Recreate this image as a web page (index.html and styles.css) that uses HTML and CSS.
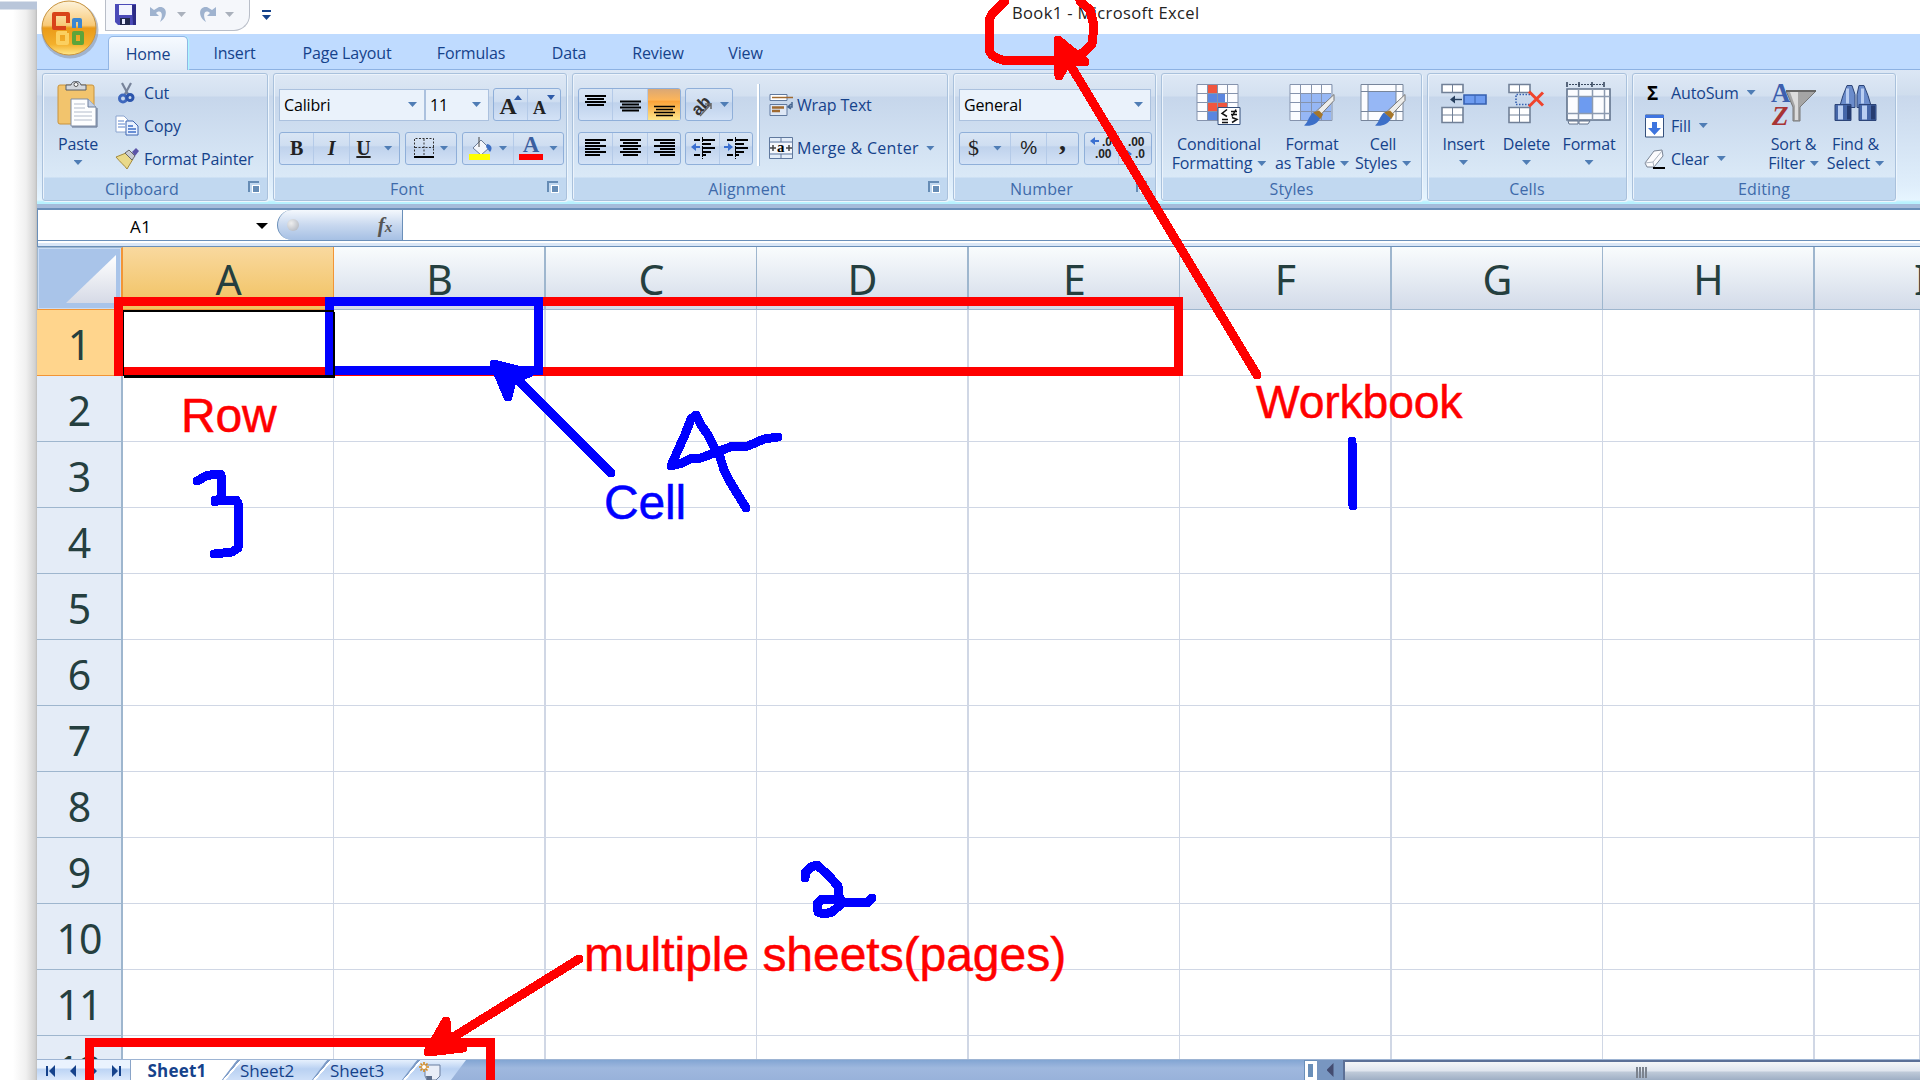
FILE: index.html
```html
<!DOCTYPE html>
<html lang="en">
<head>
<meta charset="utf-8">
<title>Book1 - Microsoft Excel</title>
<link rel="stylesheet" href="styles.css">
</head>
<body>
<aside class="desktop"></aside>
<main class="window">
  <header class="titlebar">
    <div class="qat">
      <svg width="21" height="21" viewBox="0 0 21 21"><path d="M0 0h21v21H3l-3-3z" fill="#4b4bb8"/><path d="M4 1h13v10H4z" fill="#f2f4ff"/><path d="M17 1h4v20h-3z" fill="#2c2c86"/><path d="M5 14h10v7H5z" fill="#222a4c"/><path d="M7 15h3v5H7z" fill="#e8ecff"/></svg>
      <svg class="undo" width="20" height="20" viewBox="0 0 20 20"><path d="M1 3v9h9L7 9c5-4 8 1 4 9 8-5 8-16-1-15L5 6z" fill="#9fb3cf"/></svg><i class="dd gray"></i>
      <svg class="redo" width="20" height="20" viewBox="0 0 20 20"><path d="M19 3v9h-9l3-3c-5-4-8 1-4 9-8-5-8-16 1-15l5 3z" fill="#9fb3cf"/></svg><i class="dd gray"></i>
    </div>
    <div class="qat-more"><i></i><i class="dd"></i></div>
    <h1>Book1 - Microsoft Excel</h1>
  </header>
  <nav class="tabs">
    <a class="active t1">Home</a><a class="t2">Insert</a><a class="t3">Page Layout</a><a class="t4">Formulas</a><a class="t5">Data</a><a class="t6">Review</a><a class="t7">View</a>
  </nav>
  <section class="ribbon">
    <div class="group g-clip">
      <div class="body">
        <div class="big paste">
          <svg width="44" height="48" viewBox="0 0 44 48"><rect x="2" y="4" width="36" height="39" rx="2" fill="#f2c46d" stroke="#c8923c"/><path d="M10 4h5c1-5 9-5 10 0h5v5H10z" fill="#d4d8de" stroke="#555c68"/><circle cx="20" cy="3.500" r="2" fill="#fff" stroke="#555"/><path d="M15 18h17l8 8v19H15z" fill="#fdfeff" stroke="#7f8ca3"/><path d="M32 18v8h8" fill="#c4d0e4" stroke="#6d7f9c"/><path d="M18 23h11M18 27h11M18 31h18M18 35h18M18 39h18" stroke="#b3bccb"/><path d="M41 27v19H16" stroke="#5f6f8a" fill="none"/></svg>
          <span>Paste</span><i class="dd"></i>
        </div>
        <div class="stack">
          <div class="line"><svg width="24" height="24" viewBox="0 0 24 24"><path d="M7 2l7 13M16 2L9 15" stroke="#77839a" stroke-width="2.200"/><circle cx="8" cy="17.500" r="3.500" fill="none" stroke="#3f68bd" stroke-width="3"/><circle cx="15" cy="16.500" r="3" fill="none" stroke="#2c55ac" stroke-width="3"/></svg><span>Cut</span></div>
          <div class="line"><svg width="24" height="24" viewBox="0 0 24 24"><path d="M1 2h8l4 4v12H1z" fill="#fff" stroke="#8ba4cf"/><path d="M3 7h6M3 10h7M3 13h7" stroke="#5a83cc"/><path d="M11 7h7l5 5v9H11z" fill="#eaf2ff" stroke="#3c64b0"/><path d="M13 12h5M13 15h8M13 18h8" stroke="#3f6fc8" stroke-width="1.500"/></svg><span>Copy</span></div>
          <div class="line"><svg width="24" height="24" viewBox="0 0 24 24"><path d="M1 10l10-4 7 6-6 10C10 19 5 15 1 10z" fill="#e9d98a" stroke="#a48a3d"/><path d="M10 6l4-3 6 6-3 4z" fill="#c9ccd2" stroke="#666"/><path d="M17 5l4-4 3 3-4 5z" fill="#5b54a8"/></svg><span>Format Painter</span></div>
        </div>
      </div>
      <footer>Clipboard<i class="launch"></i></footer>
    </div>
    <div class="group g-font">
      <div class="body rows">
        <div class="r">
          <div class="select s1">Calibri<i class="dd"></i></div><div class="select s2">11<i class="dd"></i></div>
          <div class="set m4"><b class="w34 serif grow">A<i class="up"></i></b><b class="w34 serif shrink">A<i class="down"></i></b></div>
        </div>
        <div class="r">
          <div class="set"><b class="w33 serif">B</b><b class="w36 serif it">I</b><b class="w50 serif un"><u>U</u><i class="dd"></i></b></div>
          <div class="set m5"><b class="w50"><svg width="20" height="20" viewBox="0 0 20 20"><path d="M.5 17V.5h19V17M10 1v16M1 9.500h19" fill="none" stroke="#333" stroke-dasharray="2 1.500"/><path d="M0 19h20" stroke="#000" stroke-width="2"/></svg><i class="dd"></i></b></div>
          <div class="set m5"><b class="w50"><svg width="24" height="24" viewBox="0 0 24 24"><path d="M4 12l8-8 8 8-8 7z" fill="#f3f6fb" stroke="#6c7d97"/><path d="M10 1v10" stroke="#444"/><path d="M18 8c6 1 5 6 3 8l-4-5z" fill="#3d6fc4"/><path d="M0 18h21v6H0z" fill="#ff0"/></svg><i class="dd"></i></b><b class="w50"><span class="fcolor">A</span><i class="dd"></i></b></div>
        </div>
      </div>
      <footer>Font<i class="launch"></i></footer>
    </div>
    <div class="group g-align">
      <div class="body">
        <div class="rows">
          <div class="r">
            <div class="set"><b class="w34"><svg width="21" height="24"><path d="M0 3h21M2 6h17M0 9h21M2 12h17" stroke="#000" stroke-width="1.800"/></svg></b><b class="w35"><svg width="21" height="24"><path d="M0 8.500h21M2 11.500h17M0 14.500h21M2 17.500h17" stroke="#000" stroke-width="1.800"/></svg></b><b class="w33 on"><svg width="21" height="24"><path d="M0 13.500h21M2 16.500h17M0 19.500h21M2 22.500h17" stroke="#000" stroke-width="1.300"/></svg></b></div>
            <div class="set m4"><b class="w46"><svg width="25" height="26" viewBox="0 0 25 26"><text x="3" y="22" transform="rotate(-45 9 16)" font-family="Liberation Sans" font-size="17" font-weight="700" fill="#333">ab</text><path d="M11 24L22 12M22 11v6M22 12h-6" stroke="#666" fill="none" stroke-width="1.500"/></svg><i class="dd"></i></b></div>
          </div>
          <div class="r">
            <div class="set"><b class="w34"><svg width="21" height="18"><path d="M0 1h21M0 4h15M0 7h21M0 10h15M0 13h21M0 16h15" stroke="#000" stroke-width="1.800"/></svg></b><b class="w35"><svg width="21" height="18"><path d="M0 1h21M3 4h15M0 7h21M3 10h15M0 13h21M3 16h15" stroke="#000" stroke-width="1.800"/></svg></b><b class="w33"><svg width="21" height="18"><path d="M0 1h21M6 4h15M0 7h21M6 10h15M0 13h21M6 16h15" stroke="#000" stroke-width="1.800"/></svg></b></div>
            <div class="set m4"><b class="w33"><svg width="24" height="24"><path d="M11 4h13M11 8h9M11 12h13M11 16h9M3 4h6M3 19h6M11 19h4" stroke="#000" stroke-width="2"/><path d="M0 11l5-4v3h4v2H5v3z" fill="#3a6fd0"/><path d="M11.500 1v22" stroke="#000" stroke-dasharray="2 1"/></svg></b><b class="w33"><svg width="24" height="24"><path d="M11 4h13M11 8h9M11 12h13M11 16h9M3 4h6M3 19h6M11 19h4" stroke="#000" stroke-width="2"/><path d="M9 11L4 7v3H0v2h4v3z" fill="#3a6fd0"/><path d="M11.500 1v22" stroke="#000" stroke-dasharray="2 1"/></svg></b></div>
          </div>
        </div>
        <div class="sep"></div>
        <div class="rows wrapcol">
          <div class="r"><svg width="24" height="24" viewBox="0 0 24 24"><path d="M1 1.500h17v6H1z" fill="#fff" stroke="#60799e"/><path d="M3 4.500h21" stroke="#a06a30" stroke-width="1.500"/><path d="M1 11.500h17v11H1z" fill="#dfe8f6" stroke="#60799e"/><path d="M3 14.500h12M3 18h8" stroke="#a06a30" stroke-width="2.400"/><path d="M23 9v5h-3M22 11l-3 3 3 2" stroke="#44648f" fill="none" stroke-width="1.500"/></svg><span>Wrap Text</span></div>
          <div class="r"><svg width="24" height="24" viewBox="0 0 24 24"><path d="M.5 1.500h23v21H.5z" fill="#e3edf9" stroke="#60799e"/><path d="M1 6h22M1 18h22M12 1v5M12 18v5" stroke="#60799e"/><path d="M1 7h22v10H1z" fill="#f4f7fc"/><path d="M1 12h6M23 12h-6M4 9v6M20 9v6" stroke="#444" stroke-width="1.500"/><text x="8" y="16" font-family="Liberation Serif" font-size="15" font-weight="700" fill="#000">a</text></svg><span class="merge">Merge &amp; Center</span><i class="dd"></i></div>
        </div>
      </div>
      <footer>Alignment<i class="launch"></i></footer>
    </div>
    <div class="group g-num">
      <div class="body rows">
        <div class="r"><div class="select s3">General<i class="dd"></i></div></div>
        <div class="r">
          <div class="set"><b class="w50 serif n"><span>$</span><i class="dd"></i></b><b class="w36 sans">%</b><b class="w32 serif comma">,</b></div>
          <div class="set m5"><b class="w33"><svg width="24" height="24" viewBox="0 0 24 24" font-family="Liberation Sans" font-size="12" fill="#222"><path d="M0 5l5-4v3h4v2H5v3z" fill="#3a6fd0"/><text x="12" y="10">.0</text><text x="5" y="22">.00</text></svg></b><b class="w33"><svg width="24" height="24" viewBox="0 0 24 24" font-family="Liberation Sans" font-size="12" fill="#222"><path d="M9 18l-5-4v3H0v2h4v3z" fill="#3a6fd0"/><text x="5" y="10">.00</text><text x="12" y="22">.0</text></svg></b></div>
        </div>
      </div>
      <footer>Number<i class="launch"></i></footer>
    </div>
    <div class="group g-styles">
      <div class="body">
        <div class="big c1"><svg width="46" height="43" viewBox="0 0 46 43"><path d="M1 1h41v36H1z" fill="#fbfcff"/><path d="M12 1h9v9h-9zM12 19h19v9H12z" fill="#f0563f"/><path d="M12 10h17v9H12zM12 28h9v9h-9z" fill="#5b86e0"/><path d="M1 1h41v36H1zM11.500 1v36M21.500 1v36M31.500 1v36M1 10h41M1 19h41M1 28h41" fill="none" stroke="#8593ad"/><path d="M22 24h22v17H22z" fill="#fff" stroke="#334d78"/><path d="M31 26l-5 4 5 3M26 36h6M26 39h6M35 28h6M35 31h6M40 26l-4 7M36 34l5 2-5 3" stroke="#111" stroke-width="1.500" fill="none"/></svg><span>Conditional</span><span>Formatting <i class="dd"></i></span></div>
        <div class="big c2"><svg width="46" height="43" viewBox="0 0 46 43"><path d="M1 1h41v36H1z" fill="#fbfcff"/><path d="M11 10h31v27H11z" fill="#96b7f5"/><path d="M1 1h42v36H1zM11.500 1v36M22.500 1v36M32.500 1v36M1 10h41M1 19h41M1 28h41" fill="none" stroke="#8593ad"/><path d="M45 11v6L31 32l-4-4z" fill="#ededeb" stroke="#797979"/><path d="M24 29l6-2 4 4-3 5z" fill="#a5762b"/><path d="M24 29l7 6c-3 6-9 8-16 7 4-3 4-8 9-13z" fill="#3c6fc8"/></svg><span>Format</span><span>as Table <i class="dd"></i></span></div>
        <div class="big c3"><svg width="46" height="43" viewBox="0 0 46 43"><path d="M1 1h42v36H1z" fill="#fbfcff"/><path d="M8 8h28v20H8z" fill="#96b7f5"/><path d="M1 1h42v36H1zM8 1v36M36 1v36M1 8h42M1 28h42" fill="none" stroke="#77859b"/><path d="M45 11v6L31 32l-4-4z" fill="#ededeb" stroke="#797979"/><path d="M24 29l6-2 4 4-3 5z" fill="#a5762b"/><path d="M24 29l7 6c-3 6-9 8-16 7 4-3 4-8 9-13z" fill="#3c6fc8"/></svg><span>Cell</span><span>Styles <i class="dd"></i></span></div>
      </div>
      <footer>Styles</footer>
    </div>
    <div class="group g-cells">
      <div class="body">
        <div class="big d1"><svg width="46" height="43" viewBox="0 0 46 43"><path d="M1 1h21v8H1zM1 24h21v15H1z" fill="#fff" stroke="#718097" stroke-width="1.600"/><path d="M11.500 1v8M11.500 24v15M1 31.500h21" stroke="#718097"/><path d="M23 11.500h22v9H23z" fill="#6d9bf0" stroke="#3660b0" stroke-width="1.600"/><path d="M34 12v8" stroke="#3660b0"/><path d="M21 16H11" stroke="#28405f" stroke-width="1.400"/><path d="M9 16l5-4v8z" fill="#28405f"/></svg><span>Insert</span><i class="dd"></i></div>
        <div class="big d2"><svg width="46" height="43" viewBox="0 0 46 43"><path d="M5 1h21v8H5zM5 24h21v15H5z" fill="#fff" stroke="#718097" stroke-width="1.600"/><path d="M15.500 1v8M15.500 24v15M5 31.500h21" stroke="#718097"/><path d="M26 11H12v10h14" fill="none" stroke="#3660b0" stroke-width="1.600" stroke-dasharray="1.500 1.500"/><path d="M25 8l14 14M39 9L25 23" stroke="#f0432c" stroke-width="3"/></svg><span>Delete</span><i class="dd"></i></div>
        <div class="big d3"><svg width="46" height="46" viewBox="0 0 46 46"><path d="M1 0v5M13 0v5M26 0v5M38 0v5" stroke="#39495f" stroke-width="1.600"/><path d="M3 2.500h34" stroke="#39495f" stroke-dasharray="2 1"/><path d="M1 7h43v31H1z" fill="#fbfcff" stroke="#62738c" stroke-width="1.600"/><path d="M13 15h13v16H13z" fill="#6d9bf0"/><path d="M12.500 7v31M26.500 7v31M38.500 7v31M1 14.500h43M1 31.500h43" stroke="#8c9ab0" stroke-width="1.500"/><path d="M2 39h10v3H3zM13 39h11l-2 3h-9z" fill="#fff" stroke="#62738c"/></svg><span>Format</span><i class="dd"></i></div>
      </div>
      <footer>Cells</footer>
    </div>
    <div class="group g-edit">
      <div class="body">
        <div class="stack">
          <div class="line"><b class="sigma">Σ</b><span>AutoSum</span><i class="dd"></i></div>
          <div class="line"><svg width="20" height="24" viewBox="0 0 20 24"><path d="M.5 1h18v22H.5z" fill="#fff" stroke="#35507c"/><path d="M0 1h19v3H0z" fill="#3f74e0"/><path d="M7 8h5v6h4l-6.500 7L3 14h4z" fill="#3d74de"/></svg><span>Fill</span><i class="dd"></i></div>
          <div class="line"><svg width="22" height="22" viewBox="0 0 22 22"><path d="M1 15L10 3l8-1 1 6-9 11H3z" fill="#fbfbfd" stroke="#7a8494"/><path d="M1 15l8-1 9-11M9 14l1 5" fill="none" stroke="#aab2be"/><path d="M9 20h12" stroke="#000" stroke-width="2"/></svg><span>Clear</span><i class="dd"></i></div>
        </div>
        <div class="big e1"><svg width="46" height="46" viewBox="0 0 46 46"><text x="0" y="20" font-family="Liberation Serif" font-size="27" font-weight="700" fill="#3c5fae">A</text><text x="1" y="43" font-family="Liberation Serif" font-size="27" font-weight="700" font-style="italic" fill="#a83434">Z</text><path d="M15 9h30L29 25v14h-7V25z" fill="#a5a5a5" stroke="#777"/><path d="M19 10h8v28h-3V24z" fill="#ddd"/><path d="M15 9h30" stroke="#666" stroke-width="2"/></svg><span>Sort &amp;</span><span>Filter <i class="dd"></i></span></div>
        <div class="big e2"><svg width="46" height="43" viewBox="0 0 46 43"><g stroke="#2c4478"><path d="M14 2h5l3 9v13h-6L7 22l3-10zM26 2h5l4 10 3 10-9 2h-5V11z" fill="#6b8ccb"/><path d="M2 21h16v16H2zM26 21h17v16H26z" fill="#4566a8"/></g><path d="M5 22h5v14H5zM29 22h5v14h-5zM13 5h3v15h-3zM28 5h3v15h-3z" fill="#b9cef2"/><path d="M14 22h4v14h-4zM38 22h4v14h-4z" fill="#263c70"/></svg><span>Find &amp;</span><span>Select <i class="dd"></i></span></div>
      </div>
      <footer>Editing</footer>
    </div>
  </section>
  <section class="formula">
    <div class="namebox"><span>A1</span><i class="dd black"></i></div>
    <div class="fx"><i class="knob"></i><em>f<small>x</small></em></div>
    <div class="entry"></div>
  </section>
  <section class="sheet">
    <div class="row head"><b class="corner"></b><i class="sel">A</i><i>B</i><i>C</i><i>D</i><i>E</i><i>F</i><i>G</i><i>H</i><i class="cut">I</i></div>
    <div class="row"><b class="sel">1</b><i class="cursor"></i><i></i><i></i><i></i><i></i><i></i><i></i><i></i><i></i></div>
    <div class="row"><b>2</b><i></i><i></i><i></i><i></i><i></i><i></i><i></i><i></i><i></i></div>
    <div class="row"><b>3</b><i></i><i></i><i></i><i></i><i></i><i></i><i></i><i></i><i></i></div>
    <div class="row"><b>4</b><i></i><i></i><i></i><i></i><i></i><i></i><i></i><i></i><i></i></div>
    <div class="row"><b>5</b><i></i><i></i><i></i><i></i><i></i><i></i><i></i><i></i><i></i></div>
    <div class="row"><b>6</b><i></i><i></i><i></i><i></i><i></i><i></i><i></i><i></i><i></i></div>
    <div class="row"><b>7</b><i></i><i></i><i></i><i></i><i></i><i></i><i></i><i></i><i></i></div>
    <div class="row"><b>8</b><i></i><i></i><i></i><i></i><i></i><i></i><i></i><i></i><i></i></div>
    <div class="row"><b>9</b><i></i><i></i><i></i><i></i><i></i><i></i><i></i><i></i><i></i></div>
    <div class="row"><b>10</b><i></i><i></i><i></i><i></i><i></i><i></i><i></i><i></i><i></i></div>
    <div class="row"><b>11</b><i></i><i></i><i></i><i></i><i></i><i></i><i></i><i></i><i></i></div>
    <div class="row"><b>12</b><i></i><i></i><i></i><i></i><i></i><i></i><i></i><i></i><i></i></div>
  </section>
  <footer class="bottom">
    <div class="navs"><svg width="94" height="21" viewBox="0 0 94 21" fill="#15428b"><path d="M9 6h2v10H9zM18 5v12l-6-6zM39 5v12l-6-6zM54 5v12l6-6zM75 5v12l6-6zM82 6h2v10h-2z"/></svg></div>
    <div class="stab first">Sheet1</div>
    <div class="stab">Sheet2</div>
    <div class="stab">Sheet3</div>
    <div class="stab new"><svg width="24" height="21" viewBox="0 0 24 21"><path d="M7 5h15v11l-4 4H9l-2-4z" fill="#e9eef8" stroke="#6b7f9f"/><path d="M8 16h6v5H9z" fill="#5e6f8d"/><path d="M6 2v10M1 7h10M2.500 3.500l7 7M9.500 3.500l-7 7" stroke="#d58a1e" stroke-width="1.600"/><circle cx="6" cy="7" r="2" fill="#fff"/></svg></div>
    <div class="filler"></div>
    <div class="split"></div>
    <div class="sarrow"></div>
    <div class="thumb"><i></i><i></i><i></i><i></i></div>
  </footer>
</main>
<svg class="orb" width="64" height="62" viewBox="0 0 64 62">
  <defs>
    <linearGradient id="orbFill" x1="0" y1="0" x2="0" y2="1"><stop offset="0" stop-color="#fdf3dc"/><stop offset=".45" stop-color="#f8c976"/><stop offset=".5" stop-color="#ea9a18"/><stop offset=".8" stop-color="#f3b02c"/><stop offset="1" stop-color="#ffe98c"/></linearGradient>
  </defs>
  <circle cx="32" cy="30" r="28.500" fill="#8d98aa" opacity=".6"/>
  <circle cx="31" cy="28" r="27" fill="url(#orbFill)" stroke="#c9933c"/>
  <g fill="none" stroke-width="4" stroke-linejoin="round">
    <path d="M28 28H16V14h14v9" stroke="#d8431a"/><path d="M36 28v-8h6v8" stroke="#3a86d0"/>
    <path d="M29 33h-9v10h9v-10" stroke="#fbd060"/><path d="M36 33h8v10h-8z" stroke="#5da43a"/>
  </g>
</svg>
<svg class="notes" width="1920" height="1080" viewBox="0 0 1920 1080">
  <g fill="none" stroke="#f00" stroke-width="9" stroke-linecap="round" stroke-linejoin="round" shape-rendering="crispEdges">
    <path d="M118.500 301.500H1178.500V371.500H118.500z" stroke-linejoin="miter"/>
    <path d="M89.500 1090V1042.500H490.500V1090" stroke-linejoin="miter"/>
    <path d="M1005 1L992 14Q989 18 989 26V50Q990 56 1002 60H1063L1083 53L1092 44L1094 26L1090 10L1080 1"/>
    <path d="M1257 375L1066 58"/><path d="M1058 40L1059 76L1068 60L1085 62z" fill="#f00"/>
    <path d="M579 959L455 1036"/><path d="M446 1021L428 1052L463 1048L448 1042z" fill="#f00"/>
  </g>
  <g fill="none" stroke="#00f" stroke-width="9" stroke-linecap="round" stroke-linejoin="round" shape-rendering="crispEdges">
    <path d="M329.500 301.500H538.500V370.500H329.500z" stroke-linejoin="miter"/>
    <path d="M611 473L515 377"/><path d="M494 364L508 397L512 380L529 373z" fill="#00f"/>
    <path d="M197 481L206 476L213 474.500H221V497L215 502V500H236L238 503V548L232 552L214 554"/>
    <path d="M696 415L691 419L684 437L678 450L671 466L682 463L692 458H701L733 446H748L764 439L778 437M696 415L701 425L708 435L714 447L720 457L724 470L729 480L735 490L746 508"/>
    <path d="M1352 441L1353 506"/>
    <path d="M805 878V873L811 867L817 865L828 875L838 886L840 905L832 912L824 914L818 912L817 904L822 899H838L845 902.500H868L872 898"/>
  </g>
  <g font-family="Liberation Sans, Arial, sans-serif" font-size="48" fill="#f00" stroke="#f00" stroke-width=".5">
    <text x="181" y="432">Row</text>
    <text x="1256" y="418" font-size="46.300">Workbook</text>
    <text x="584" y="970.500" textLength="482">multiple sheets(pages)</text>
    <text x="604" y="518.500" fill="#00f" stroke="#00f">Cell</text>
  </g>
</svg>
</body>
</html>
```
FILE: styles.css
```css
* { box-sizing: border-box; }
html, body { margin: 0; width: 1920px; height: 1080px; overflow: hidden; }
body { display: flex; background: #fff; position: relative; font: 16px "Open Sans", "Noto Sans", sans-serif; color: #15428b; letter-spacing: -.15px; }
i, em { font-style: normal; }
.desktop { width: 37px; background: linear-gradient(#fff 0 1px, #b9c6da 2px 9px, transparent 10px), linear-gradient(90deg, #fff 35%, #f0f0f0 70%, #d2d2d2 95%, #bcbcbc); flex: none; }
.window { width: 1883px; height: 1080px; display: flex; flex-direction: column; flex: none; }
.dd { display: inline-block; width: 9px; height: 5px; background: #4f7db5; clip-path: polygon(0 0, 100% 0, 50% 100%); flex: none; }
.dd.gray { background: #aab1bc; }
.dd.black { width: 12px; height: 6px; background: #000; }

.titlebar { height: 34px; display: flex; background: #fff; flex: none; }
.qat { margin-left: 68px; width: 145px; height: 31px; border: 1px solid #b9bec8; border-top: 0; border-radius: 0 0 16px 0; background: #f5f7fb; display: flex; align-items: flex-start; padding: 4px 0 0 9px; }
.qat .undo { margin-left: 13px; }
.qat .redo { margin-left: 11px; }
.qat .dd { margin: 8px 0 0 8px; }
.qat-more { margin: 10px 0 0 12px; width: 9px; display: flex; flex-direction: column; gap: 3px; }
.qat-more i:first-child { height: 2px; background: #15428b; }
.qat-more .dd { background: #15428b; }
h1 { margin: 0 0 0 741px; font-size: 16.5px; font-weight: 400; color: #222; line-height: 26px; letter-spacing: .38px; white-space: nowrap; }

.tabs { height: 36px; background: #bfdbff; border-bottom: 1px solid #8db2e3; display: flex; align-items: flex-end; flex: none; }
.tabs a { height: 34px; line-height: 37px; text-align: center; white-space: nowrap; }
.t1 { margin-left: 71px; width: 80px; }
.tabs .active { line-height: 35px; background: linear-gradient(#f6faff, #dfe9f6); border: 1px solid #92b5e4; border-bottom: 0; border-radius: 5px 5px 0 0; box-shadow: 1px 0 1px #a8fbff; margin-bottom: -1px; }
.t2 { width: 93px; }
.t3 { width: 132px; }
.t4 { width: 116px; }
.t5 { width: 80px; }
.t6 { width: 98px; }
.t7 { width: 77px; }

.ribbon { height: 134px; padding: 3px 0 3px 5px; display: flex; gap: 5px; background: linear-gradient(#dce7f5, #cfdded 25px, #c9d8ec 26px, #dfeefb 115px, #e6f5ff 130px, #b8f2ff 132px); flex: none; }
.group { height: 128px; border: 1px solid #a9c1dc; border-radius: 3px; box-shadow: inset 1px 1px #ecf3fb, 1px 1px #eef6fd; display: flex; flex-direction: column; background: linear-gradient(#dee8f5, #d3e0f0 22px, #c6d6eb 23px, #dae9f7 103px, #c1d8f0 104px); flex: none; }
.g-clip { width: 226px; }
.g-font { width: 294px; }
.g-align { width: 376px; }
.g-num { width: 203px; }
.g-styles { width: 261px; }
.g-cells { width: 200px; }
.g-edit { width: 264px; }
.body { height: 103px; display: flex; }
.group footer { height: 23px; line-height: 24px; text-align: center; color: #3e6aaa; position: relative; padding-right: 26px; letter-spacing: .15px; }
.g-styles footer, .g-cells footer, .g-edit footer { padding-right: 0; }
.launch { position: absolute; right: 8px; top: 4px; width: 11px; height: 11px; border: 2px solid #668cb5; border-right: 0; border-bottom: 0; }
.launch::after { content: ""; position: absolute; left: 3px; top: 3px; width: 6px; height: 6px; background: #668cb5; outline: 1px solid #fff; }
.big { display: flex; flex-direction: column; align-items: center; line-height: 19px; white-space: nowrap; padding-top: 8px; flex: none; }
.big svg { display: block; height: 46px; margin-bottom: 7px; flex: none; }
.big > .dd { margin-top: 6px; }
.big span .dd { vertical-align: 3px; margin-left: 1px; }
.paste { width: 70px; padding-top: 7px; }
.paste svg { height: 48px; margin-bottom: 6px; }
.stack { display: flex; flex-direction: column; padding: 2px 0 0 0; }
.line { height: 33px; display: flex; align-items: center; white-space: nowrap; }
.g-clip .line svg { margin: 0 5px 0 2px; }
.rows { flex-direction: column; padding: 14px 0 0 5px; display: flex; gap: 11px; }
.r { display: flex; height: 33px; align-items: center; white-space: nowrap; }
.r + .r { height: 32px; }
.select { height: 32px; border: 1px solid #abc1de; background: #eaf2fb; color: #000; display: flex; align-items: center; justify-content: space-between; padding: 0 7px 0 4px; }
.s1 { width: 146px; }
.s2 { width: 64px; }
.s3 { width: 192px; }
.set { height: 33px; border: 1px solid #8fafd9; border-radius: 3px; display: flex; background: linear-gradient(#d9e5f4, #cfdef1 40%, #bfd2ec 45%, #d3e2f6); }
.set b { display: flex; align-items: center; justify-content: center; gap: 6px; color: #222; border-left: 1px solid #b4cae8; position: relative; }
.set b:first-child { border-left: 0; }
.m4 { margin-left: 4px; }
.m5 { margin-left: 5px; }
.w32 { width: 32px; }
.w33 { width: 33px; }
.w34 { width: 33px; }
.w35 { width: 35px; }
.w36 { width: 36px; }
.w46 { width: 46px; }
.w50 { width: 50px; }
.set .serif { font-family: "Liberation Serif", serif; font-size: 20px; }
.set .grow { font-size: 24px; padding: 3px 5px 0 0; }
.set .shrink { font-size: 18px; padding: 7px 9px 0 0; }
.up, .down { position: absolute; right: 5px; top: 6px; width: 8px; height: 5px; background: #2f5ba8; clip-path: polygon(50% 0, 100% 100%, 0 100%); }
.down { clip-path: polygon(0 0, 100% 0, 50% 100%); }
.it { font-style: italic; }
.set .un { gap: 13px; }
.fcolor { font: 700 23px/18px "Liberation Serif", serif; color: #3b5f9f; border-bottom: 6px solid #f00; width: 24px; height: 24px; text-align: center; }
.on { background: linear-gradient(#dba875, #fdb559 35%, #fba33a 40%, #fee68a); }
.set .n { gap: 14px; font-size: 22px; font-weight: 400; }
.sans { font-family: "Liberation Sans", sans-serif; font-weight: 400; font-size: 19px; }
.set .comma { font-size: 28px; padding-bottom: 14px; }
.sep { width: 3px; height: 82px; margin: 10px 0 0 4px; background: linear-gradient(90deg, #fff 2px, #a9c1dc 2px); }
.wrapcol { padding-left: 9px; }
.wrapcol svg { margin-right: 4px; }
.wrapcol .dd { margin-left: 7px; }
.merge { letter-spacing: .3px; }
.c1 { width: 114px; }
.c2 { width: 72px; }
.c3 { width: 70px; }
.d1 { width: 71px; }
.d2 { width: 55px; }
.d3 { width: 70px; }
.g-edit .stack { width: 129px; padding-left: 11px; }
.g-edit .line svg, .sigma { width: 22px; margin-right: 5px; flex: none; }
.g-edit .line .dd { margin-left: 8px; }
.g-edit .sigma { color: #000; font-size: 19px; padding-left: 3px; }
.e1 { width: 63px; }
.e2 { width: 61px; }

.formula { margin-top: 4px; height: 39px; display: flex; flex: none; border-top: 2px solid #6a8fb9; border-left: 1px solid #6a8fb9; background: linear-gradient(#fff 30px, #6a8fb9 30px 31px, #fff 31px 33px, #d9e6f6 33px 36px, #6a8fb9 36px); box-shadow: 0 -4px #a5bcdb; position: relative; }
.namebox { width: 239px; height: 32px; display: flex; align-items: center; color: #000; padding-left: 92px; font-size: 17px; letter-spacing: .5px; }
.namebox span { width: 25px; }
.namebox .dd { margin-left: 101px; }
.fx { width: 126px; height: 30px; border: 1px solid #6a8fb9; border-top: 0; border-bottom: 0; border-radius: 15px 0 0 15px; background: linear-gradient(#f4f8fd, #c8d8ef 50%, #a6c0e4); display: flex; justify-content: space-between; align-items: center; padding: 0 10px 0 9px; }
.knob { width: 12px; height: 12px; border-radius: 6px; background: radial-gradient(circle at 35% 35%, #eee, #a9afba); }
.fx em { font: italic 700 21px "Liberation Serif", serif; color: #555; }
.fx small { font-size: 15px; }

.sheet { height: 812px; overflow: hidden; flex: none; }
.row { display: grid; grid-template-columns: 86px 211px 212px 211px 212px 211px 212px 211px 212px 105px; grid-template-rows: 66px; height: 66px; font-family: "Noto Sans", sans-serif; font-size: 41px; line-height: 59px; color: #253f3f; letter-spacing: -1px; text-align: center; }
.row b { font-weight: 400; background: #e4ecf7; border-right: 2px solid #9eb6ce; border-bottom: 1px solid #9eb6ce; padding-top: 5px; }
.row i { border-right: 1px solid #d0d7e5; border-bottom: 1px solid #d0d7e5; }
.row i:nth-child(odd) { border-right-width: 2px; }
.row b.sel { background: #ffd58d; border-color: #f29536; }
.head { height: 63px; grid-template-rows: 63px; line-height: 56px; }
.head i { padding-top: 4px; background: linear-gradient(#f9fcfd, #d3dbe9); border-color: #9eb6ce; }
.head .sel { background: linear-gradient(#f9d99f, #f1c15f); border-color: #f29536; }
.head .corner { background: #a9c4e9; border: 2px solid #9eb6ce; border-width: 1px 2px 1px 1px; border-right-color: #f29536; border-bottom-color: #f29536; display: flex; justify-content: flex-end; padding: 7px 5px; box-shadow: inset 0 0 0 1px #c9dcf5; }
.corner::after { content: ""; width: 50px; height: 48px; background: linear-gradient(#fff, #d6dae6); clip-path: polygon(100% 0, 100% 100%, 0 100%); }
.row .cut { text-align: left; padding-left: 99px; border-right: 0; overflow: hidden; }
.row .cursor { border-color: #000; box-shadow: inset 1px 2px #000, 1px 2px #000; z-index: 1; }

.bottom { height: 21px; display: flex; border-top: 1px solid #9db4d3; background: linear-gradient(#82a5d3, #9fb8de 8px, #98b2da); flex: none; overflow: hidden; }
.navs { width: 94px; background: linear-gradient(#eaf3fe 8px, #bcd4f5 9px, #dce9fb); border-right: 1px solid #8aa4c8; flex: none; }
.stab { position: relative; width: 105px; margin-left: -15px; padding-right: 15px; background: linear-gradient(#e6f0fd, #b9d1f2 9px, #cfe0f8); clip-path: polygon(15px 0, 100% 0, calc(100% - 15px) 100%, 0 100%); line-height: 21px; font-size: 17px; letter-spacing: -.1px; text-align: center; flex: none; }
.stab::before { content: ""; position: absolute; left: 0; top: 0; width: 18px; height: 21px; background: linear-gradient(to bottom right, transparent 42%, #7d9bc6 43% 50%, #fff 51% 57%, transparent 58%); }
.stab.first { width: 106px; margin-left: 0; padding: 0 14px 0 0; background: #fff; font-weight: 700; clip-path: polygon(0 0, 100% 0, calc(100% - 15px) 100%, 0 100%); letter-spacing: .2px; }
.stab.first::before { display: none; }
.stab.new { width: 64px; padding-right: 9px; }
.filler { flex: 1; }
.split { width: 12px; border: 3px solid #fff; outline: 1px solid #6a8fb9; background: #6a8fb9; border-right-width: 4px; margin-top: 1px; }
.sarrow { width: 26px; background: #7896c0; display: flex; align-items: center; justify-content: center; }
.sarrow::after { content: ""; width: 7px; height: 14px; background: #434c70; clip-path: polygon(100% 0, 100% 100%, 0 50%); }
.thumb { width: 577px; border-top: 2px solid #5c7096; border-left: 2px solid #5c7096; background: linear-gradient(#f5f6f7, #dfe5ee 9px, #bfcad9 10px, #9eaec4); display: flex; gap: 1px; padding: 5px 0 0 291px; }
.thumb i { width: 2px; height: 11px; background: #7c838e; }

.orb { position: absolute; left: 38px; top: 0; }
.notes { position: absolute; left: 0; top: 0; }
```
